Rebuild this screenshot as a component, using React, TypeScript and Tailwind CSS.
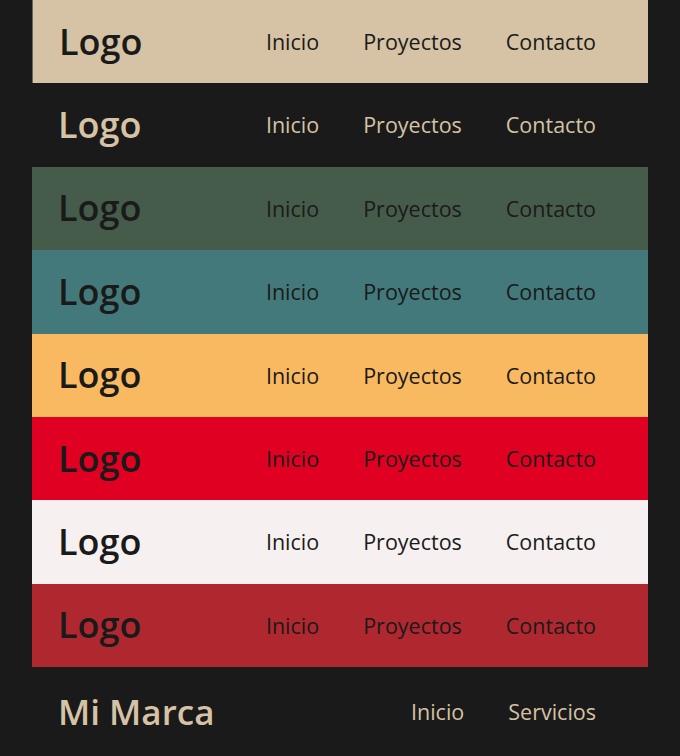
import React from "react";

type Variant = {
  bg: string;
  text: string;
};

const variants: Variant[] = [
  { bg: "bg-[#d6c2a4] border-l border-[#6b6356]", text: "text-[#1a1a1a]" },
  { bg: "bg-[#1a1a1a]", text: "text-[#d6c2a4]" },
  { bg: "bg-[#465c4a]", text: "text-[#1a1a1a]" },
  { bg: "bg-[#44797b]", text: "text-[#1a1a1a]" },
  { bg: "bg-[#f9b961]", text: "text-[#1a1a1a]" },
  { bg: "bg-[#e00022]", text: "text-[#1a1a1a]" },
  { bg: "bg-[#f7f0f0]", text: "text-[#1a1a1a]" },
  { bg: "bg-[#b0282f]", text: "text-[#1a1a1a]" },
];

const links = ["Inicio", "Proyectos", "Contacto"];

const Header: React.FC<{ v: Variant }> = ({ v }) => (
  <header
    className={`${v.bg} ${v.text} h-[83.4px] flex items-center justify-between pl-[26px] pr-[52px]`}
  >
    <div className="text-[36px] font-semibold leading-none">Logo</div>
    <nav className="flex gap-[44px] text-[21.5px] leading-none">
      {links.map((l) => (
        <a key={l} href="#">
          {l}
        </a>
      ))}
    </nav>
  </header>
);

const App: React.FC = () => {
  return (
    <div
      className="min-h-screen bg-[#1a1a1a] px-8"
      style={{ fontFamily: '"Open Sans", "Noto Sans", sans-serif' }}
    >
      {variants.map((v, i) => (
        <Header key={i} v={v} />
      ))}
      <header className="h-[89px] flex items-center justify-between pl-[26px] pr-[52px] text-[#d6c2a4]">
        <div className="text-[35px] font-semibold leading-none">Mi Marca</div>
        <nav className="flex gap-[44px] text-[21.5px] leading-none">
          <a href="#">Inicio</a>
          <a href="#">Servicios</a>
        </nav>
      </header>
    </div>
  );
};

export default App;
